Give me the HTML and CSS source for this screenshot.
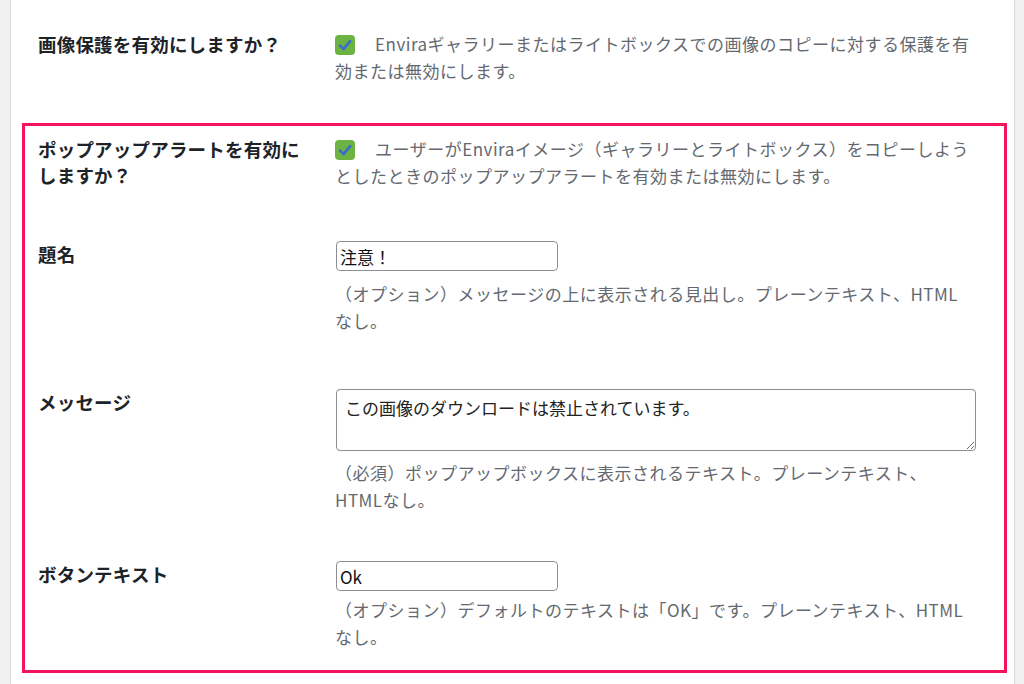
FILE: index.html
```html
<!DOCTYPE html>
<html lang="ja">
<head>
<meta charset="utf-8">
<title>Envira 設定</title>
<link rel="stylesheet" href="styles.css">
</head>
<body>
<div class="panel">
  <section class="group">
    <div class="row">
      <div class="label">画像保護を有効にしますか？</div>
      <div class="field">
        <p class="desc"><span class="check"><svg width="20" height="20" viewBox="0 0 20 20"><rect x="0" y="0" width="20" height="20" rx="4" fill="#6db344"/><path d="M5 10.5 L8.6 14.2 L15.2 6.2" fill="none" stroke="#3a6cc8" stroke-width="2.6" stroke-linecap="round" stroke-linejoin="round"/></svg></span>Enviraギャラリーまたはライトボックスでの画像のコピーに対する保護を有効または無効にします。</p>
      </div>
    </div>
  </section>
  <section class="group highlight">
    <div class="row">
      <div class="label">ポップアップアラートを有効にしますか？</div>
      <div class="field">
        <p class="desc"><span class="check"><svg width="20" height="20" viewBox="0 0 20 20"><rect x="0" y="0" width="20" height="20" rx="4" fill="#6db344"/><path d="M5 10.5 L8.6 14.2 L15.2 6.2" fill="none" stroke="#3a6cc8" stroke-width="2.6" stroke-linecap="round" stroke-linejoin="round"/></svg></span>ユーザーがEnviraイメージ（ギャラリーとライトボックス）をコピーしようとしたときのポップアップアラートを有効または無効にします。</p>
      </div>
    </div>
    <div class="row row-title">
      <div class="label">題名</div>
      <div class="field">
        <input class="text-input" type="text" value="注意！">
        <p class="desc desc-under">（オプション）メッセージの上に表示される見出し。プレーンテキスト、HTMLなし。</p>
      </div>
    </div>
    <div class="row row-message">
      <div class="label">メッセージ</div>
      <div class="field">
        <textarea class="text-area">この画像のダウンロードは禁止されています。</textarea>
        <p class="desc desc-under-area">（必須）ポップアップボックスに表示されるテキスト。プレーンテキスト、HTMLなし。</p>
      </div>
    </div>
    <div class="row row-button">
      <div class="label">ボタンテキスト</div>
      <div class="field">
        <input class="text-input" type="text" value="Ok">
        <p class="desc desc-under-btn">（オプション）デフォルトのテキストは「OK」です。プレーンテキスト、HTMLなし。</p>
      </div>
    </div>
  </section>
</div>
</body>
</html>
```
FILE: styles.css
```css
html, body {
  margin: 0;
  padding: 0;
}
body {
  background: #f0f0f1;
  font-family: "Noto Sans CJK JP", "Noto Sans", sans-serif;
  overflow: hidden;
}
.panel {
  margin: 0 9px 0 10px;
  min-height: 684px;
  background: #ffffff;
  border-left: 1px solid #dcdcde;
  border-right: 1px solid #dcdcde;
  box-sizing: border-box;
  padding-top: 28px;
}
.group {
  margin: 0 7px 0 11px;
  border: 3px solid transparent;
}
.highlight {
  margin-top: 36px;
  border-color: #f5145c;
  padding: 10px 0 20px;
}
.row {
  display: grid;
  grid-template-columns: 297px 1fr;
  padding-left: 13px;
}
.label {
  font-size: 18.5px;
  font-weight: 700;
  line-height: 26px;
  letter-spacing: 0.2px;
  color: #1d2327;
  padding-right: 20px;
}
.field {
  min-width: 0;
}
.desc {
  margin: 0;
  max-width: 635px;
  font-size: 17px;
  line-height: 26.5px;
  letter-spacing: 0.5px;
  color: #646970;
}
.check {
  display: inline-block;
  width: 20px;
  height: 20px;
  vertical-align: -4px;
  margin-right: 20px;
}
.check svg {
  display: block;
}
.row-title {
  margin-top: 52px;
}
.row-message {
  margin-top: 55px;
}
.row-button {
  margin-top: 48px;
}
.text-input {
  display: block;
  box-sizing: border-box;
  width: 222px;
  height: 30px;
  margin: 0 0 0 1px;
  padding: 0 3px;
  border: 1px solid #8c8f94;
  border-radius: 4px;
  font-family: inherit;
  font-size: 17px;
  color: #111;
  background: #fff;
}
.text-area {
  display: block;
  box-sizing: border-box;
  width: 640px;
  height: 62px;
  margin: 0 0 0 1px;
  padding: 5px 8px;
  border: 1px solid #8c8f94;
  border-radius: 4px;
  font-family: inherit;
  font-size: 17px;
  line-height: 26px;
  color: #222;
  background: #fff;
  resize: both;
}
.desc-under {
  margin-top: 10px;
}
.desc-under-area {
  margin-top: 9px;
}
.desc-under-btn {
  margin-top: 6px;
}
```
